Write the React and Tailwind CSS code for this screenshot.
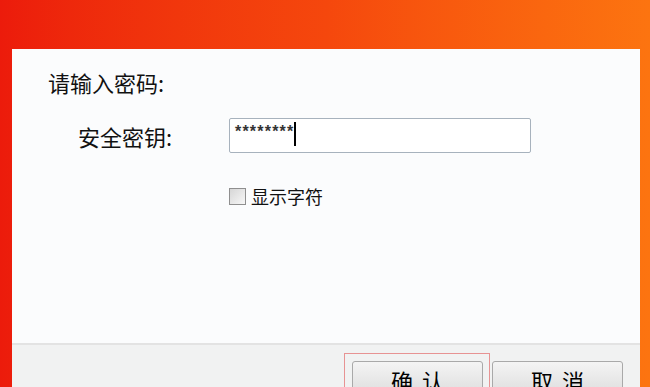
import React from 'react';

const cjk = "font-['Noto_Sans_CJK_SC','Microsoft_YaHei',sans-serif]";

const DialogButton = ({ label }) => (
  <button
    className={`${cjk} w-[131px] h-[34px] rounded-[3px] border border-[#a9a9a9] bg-gradient-to-b from-[#f4f4f4] to-[#dedede] text-[22px] leading-none text-black tracking-[9px] pl-[9px] pt-[4px]`}
  >
    {label}
  </button>
);

export default function App() {
  return (
    <div className="w-[650px] h-[387px] overflow-hidden bg-gradient-to-r from-[#ec1b0b] via-[#f5470d] to-[#fc7410] pt-[49px] pl-[12px] pr-[10px]">
      <div className="h-full flex flex-col bg-[#fbfcfd]">
        {/* Content */}
        <div className={`${cjk} h-[294px] shrink-0 text-[#111]`}>
          <p className="pl-[36px] pt-[19px] text-[22px] leading-[28px]">请输入密码:</p>

          <div className="flex items-center mt-[22px] ml-[66px]">
            <span className="w-[151px] text-[22px] leading-[28px]">安全密钥:</span>
            <div className="w-[302px] h-[35px] rounded-[2px] border border-[#a7b2bd] bg-white flex items-start pl-[5px] pt-[3px]">
              <span className="font-['Liberation_Sans',sans-serif] text-[16px] leading-[20px] tracking-[1.2px] text-[#333] font-bold">
                ********
              </span>
              <span className="w-[2px] h-[24px] bg-black" />
            </div>
          </div>

          <label className="flex items-center gap-[5px] ml-[217px] mt-[32px]">
            <span className="w-[17px] h-[17px] border border-[#8f8f8f] bg-gradient-to-br from-[#d6d6d6] to-[#f7f7f7]" />
            <span className="text-[18px] leading-[22px]">显示字符</span>
          </label>
        </div>

        {/* Footer */}
        <div className="flex-1 min-h-0 overflow-hidden border-t-2 border-[#e3e3e3] bg-[#f1f2f2] flex justify-end items-start pt-[8px] pr-[17px]">
          <div className="shrink-0 border border-[#e79393] pt-[7px] pl-[7px] pr-[6px] h-[60px]">
            <DialogButton label="确认" />
          </div>
          <div className="shrink-0 pt-[8px] ml-[2px]">
            <DialogButton label="取消" />
          </div>
        </div>
      </div>
    </div>
  );
}
